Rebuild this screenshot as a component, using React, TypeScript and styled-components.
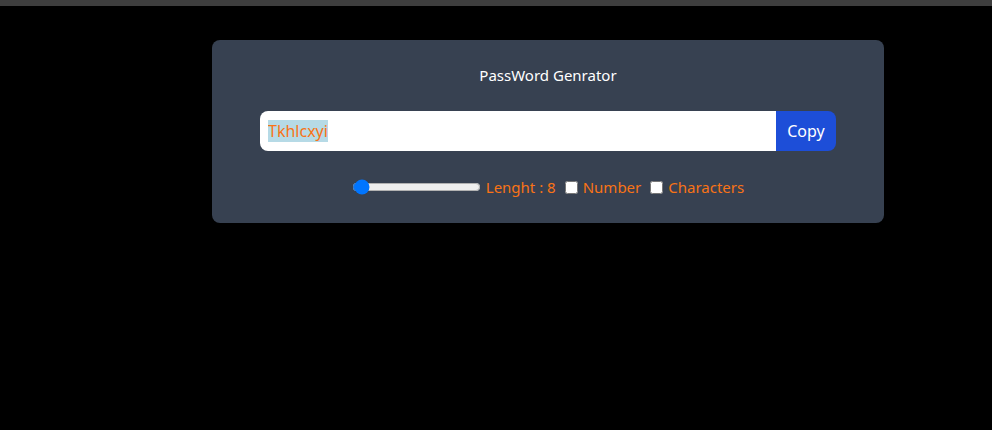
import React, { useEffect, useRef, useState } from "react";
import styled, { createGlobalStyle } from "styled-components";

const Global = createGlobalStyle`
  html, body { margin: 0; padding: 0; background: #000; }
  body { font-family: "Noto Sans", "Open Sans", sans-serif; }
  * { box-sizing: border-box; }
`;

const TopBar = styled.div`
  height: 6px;
  background: #3e3e3e;
`;

const Page = styled.div`
  padding-top: 34px;
  padding-left: 212px;
`;

const Card = styled.div`
  width: 672px;
  height: 183px;
  background: #374151;
  border-radius: 8px;
  padding: 24px 48px 0;
  display: flex;
  flex-direction: column;
  align-items: stretch;
`;

const Title = styled.h1`
  margin: 0;
  font-size: 15px;
  font-weight: 400;
  color: #fff;
  text-align: center;
  line-height: 22px;
`;

const InputRow = styled.div`
  display: flex;
  height: 40px;
  margin-top: 25px;
  border-radius: 8px;
  overflow: hidden;
`;

const PassInput = styled.input`
  flex: 1;
  border: none;
  outline: none;
  background: #fff;
  padding: 0 8px;
  font-family: "Noto Sans", sans-serif;
  font-size: 16px;
  color: #f97316;
  &::selection {
    background: #b6dae6;
    color: #f97316;
  }
`;

const CopyButton = styled.button`
  width: 60px;
  border: none;
  background: #1d4ed8;
  color: #fff;
  font-family: "Noto Sans", sans-serif;
  font-size: 16px;
  padding: 0;
  cursor: pointer;
`;

const Controls = styled.div`
  display: flex;
  justify-content: center;
  align-items: center;
  gap: 9px;
  margin-top: 26px;
  font-size: 15px;
  color: #f97316;
`;

const Group = styled.label`
  display: flex;
  align-items: center;
  gap: 5px;
`;

const Range = styled.input`
  width: 129px;
  margin: 0;
`;

const Check = styled.input`
  margin: 0;
  width: 13px;
  height: 13px;
`;

export default function App() {
  const [length, setLength] = useState(8);
  const [num, setNum] = useState(false);
  const [chars, setChars] = useState(false);
  const ref = useRef<HTMLInputElement>(null);

  useEffect(() => {
    ref.current?.select();
  }, []);

  return (
    <>
      <Global />
      <TopBar />
      <Page>
        <Card>
          <Title>PassWord Genrator</Title>
          <InputRow>
            <PassInput ref={ref} readOnly value="Tkhlcxyi" />
            <CopyButton>Copy</CopyButton>
          </InputRow>
          <Controls>
            <Group>
              <Range
                type="range"
                min={6}
                max={100}
                value={length}
                onChange={(e) => setLength(Number(e.target.value))}
              />
              <span>Lenght : {length}</span>
            </Group>
            <Group>
              <Check type="checkbox" checked={num} onChange={() => setNum(!num)} />
              <span>Number</span>
            </Group>
            <Group>
              <Check type="checkbox" checked={chars} onChange={() => setChars(!chars)} />
              <span>Characters</span>
            </Group>
          </Controls>
        </Card>
      </Page>
    </>
  );
}
